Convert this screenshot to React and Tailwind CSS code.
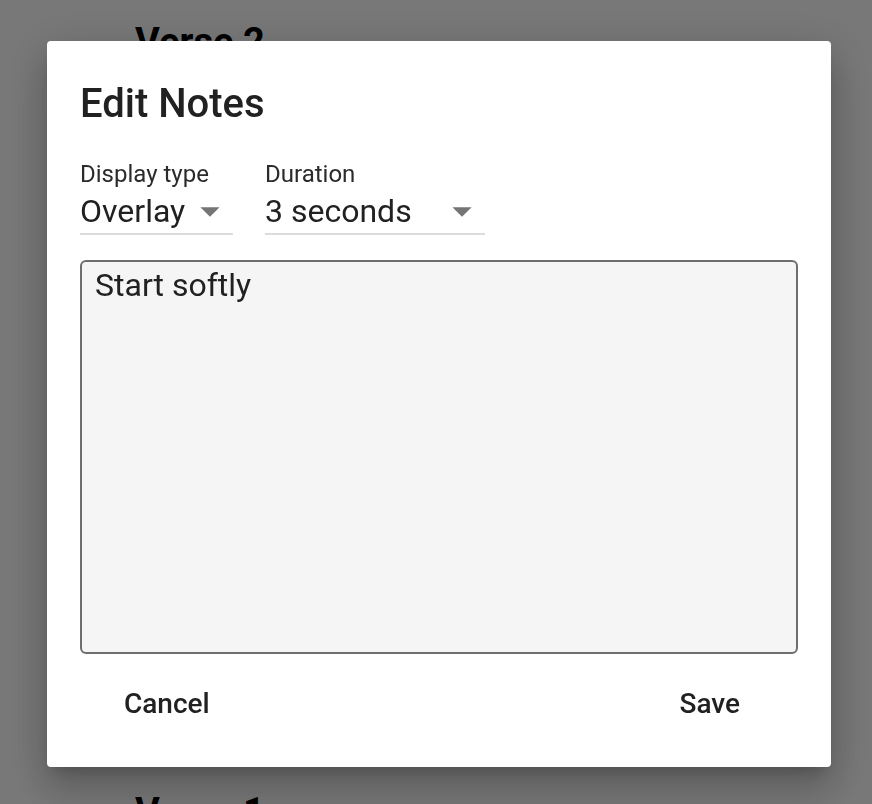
import { useState } from "react";

function ArrowDrop() {
	return (
		<svg viewBox="0 0 24 24" className="h-[46px] w-[46px] shrink-0 fill-[#757575]">
			<path d="M7 10l5 5 5-5z" />
		</svg>
	);
}

function SelectField({ label, value, width }) {
	return (
		<div className={`flex flex-col ${width}`}>
			<label className="text-[24px] leading-[28px] text-[#2b2b2b]">{label}</label>
			<div className="mt-[4px] flex h-[38px] items-center justify-between border-b-2 border-[#dcdcdc] pb-[3px] box-content">
				<span className="text-[32px] leading-[38px] text-[#212121]">{value}</span>
				<ArrowDrop />
			</div>
		</div>
	);
}

export default function App() {
	const [notes, setNotes] = useState("Start softly");

	return (
		<div className="relative h-[804px] w-[872px] overflow-hidden bg-white font-['Roboto',sans-serif]">
			{/* page behind the dialog */}
			<div className="flex flex-col pl-[135px] pt-[19px] text-black">
				<h2 className="text-[38px] font-bold leading-[46px]">Verse 2</h2>
				<div className="h-[724px]" />
				<h2 className="text-[38px] font-bold leading-[46px]">Verse 1</h2>
			</div>

			{/* backdrop + dialog */}
			<div className="fixed inset-0 flex items-start justify-start bg-black/[0.53] pl-[47px] pt-[41px]">
				<div className="flex h-[726px] w-[784px] flex-col rounded-[4px] bg-white px-[33px] pt-[40px] shadow-[0_11px_15px_-7px_rgba(0,0,0,0.2),0_24px_38px_3px_rgba(0,0,0,0.14),0_9px_46px_8px_rgba(0,0,0,0.12)]">
					<h1 className="text-[40px] font-medium leading-[46px] text-[#212121]">Edit Notes</h1>

					<div className="mt-[33px] flex gap-[32px]">
						<SelectField label="Display type" value="Overlay" width="w-[153px]" />
						<SelectField label="Duration" value="3 seconds" width="w-[220px]" />
					</div>

					<textarea
						value={notes}
						onChange={(e) => setNotes(e.target.value)}
						className="mt-[25px] h-[394px] w-full resize-none rounded-[6px] border-2 border-[#6e6e6e] bg-[#f5f5f5] px-[13px] pt-[4px] text-[32px] leading-[38px] text-[#212121] outline-none"
					/>

					<div className="mt-[33px] flex items-center justify-between pl-[44px] pr-[58px]">
						<button className="text-[28px] font-medium leading-[34px] text-[#212121]">Cancel</button>
						<button className="text-[28px] font-medium leading-[34px] text-[#212121]">Save</button>
					</div>
				</div>
			</div>
		</div>
	);
}
